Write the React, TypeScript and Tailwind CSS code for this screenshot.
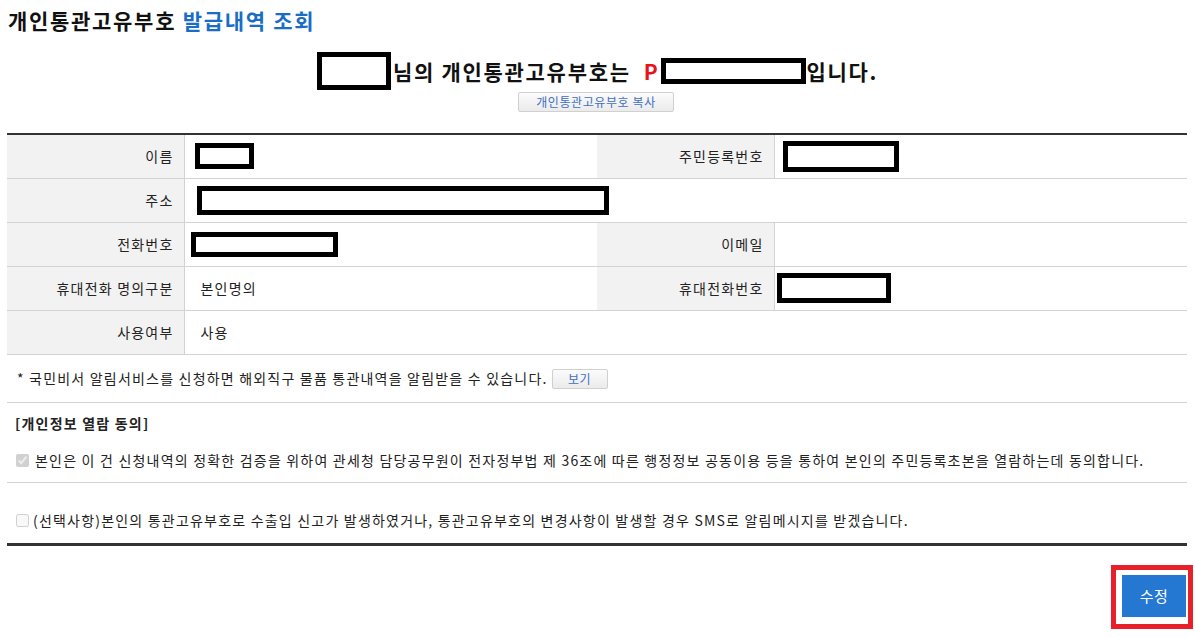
import React from 'react';

const Redact = ({ w, h, className = '' }: { w: string; h: string; className?: string }) => (
  <span className={`inline-block border-[5px] border-black bg-white align-middle ${w} ${h} ${className}`} />
);

const Label = ({ children }: { children: React.ReactNode }) => (
  <td className="bg-[#f2f2f2] text-right pr-[10px] border-r border-[#d3d3d3] align-middle">{children}</td>
);

const GrayBtn = ({ w, children }: { w: string; children: React.ReactNode }) => (
  <button className={`${w} h-[20px] border border-[#d0d0d0] rounded-[2px] bg-gradient-to-b from-[#fbfbfb] to-[#ebebeb] text-[12px] text-[#3f6fc2] leading-none tracking-[0.6px]`}>
    {children}
  </button>
);

export default function App() {
  return (
    <div className="w-[1195px] h-[638px] bg-white text-[#222] tracking-[1.2px] font-['Malgun_Gothic','Noto_Sans_CJK_KR',sans-serif] overflow-hidden">
      <h1 className="pl-[8px] pt-[6px] h-[34px] text-[21px] font-bold leading-[28px] text-[#111] tracking-[1.7px]">
        개인통관고유부호 <span className="text-[#1a6dc4]">발급내역 조회</span>
      </h1>

      <div className="mt-[18px] h-[38px] flex items-center justify-center text-[21px] font-bold text-[#111] leading-none tracking-[1.7px]">
        <Redact w="w-[74px]" h="h-[38px]" className="mr-[2px]" />
        <span>님의 개인통관고유부호는</span>
        <span className="text-[#e8141c] ml-[13px] mr-[2px]">P</span>
        <Redact w="w-[145px]" h="h-[26px]" />
        <span>입니다.</span>
      </div>

      <div className="flex justify-center mt-[2px] pr-[3px]">
        <GrayBtn w="w-[156px]">개인통관고유부호 복사</GrayBtn>
      </div>

      <table className="ml-[7px] mt-[21px] w-[1180px] border-t-2 border-[#333] border-collapse text-[14px] text-[#222] table-fixed">
        <colgroup>
          <col className="w-[177px]" />
          <col className="w-[413px]" />
          <col className="w-[177px]" />
          <col />
        </colgroup>
        <tbody>
          <tr className="h-[44px] border-b border-[#d3d3d3]">
            <Label>이름</Label>
            <td className="pl-[10px]"><Redact w="w-[59px]" h="h-[26px]" /></td>
            <Label>주민등록번호</Label>
            <td className="pl-[8px]"><Redact w="w-[116px]" h="h-[31px]" /></td>
          </tr>
          <tr className="h-[44px] border-b border-[#d3d3d3]">
            <Label>주소</Label>
            <td colSpan={3} className="pl-[12px]"><Redact w="w-[412px]" h="h-[29px]" /></td>
          </tr>
          <tr className="h-[44px] border-b border-[#d3d3d3]">
            <Label>전화번호</Label>
            <td className="pl-[6px]"><Redact w="w-[147px]" h="h-[25px]" /></td>
            <Label>이메일</Label>
            <td />
          </tr>
          <tr className="h-[44px] border-b border-[#d3d3d3]">
            <Label>휴대전화 명의구분</Label>
            <td className="pl-[16px]">본인명의</td>
            <Label>휴대전화번호</Label>
            <td className="pl-[2px]"><Redact w="w-[114px]" h="h-[30px]" /></td>
          </tr>
          <tr className="h-[44px] border-b border-[#d3d3d3]">
            <Label>사용여부</Label>
            <td colSpan={3} className="pl-[16px]">사용</td>
          </tr>
        </tbody>
      </table>

      <div className="ml-[7px] w-[1180px] text-[14px] text-[#222]">
        <div className="h-[48px] flex items-center pl-[10px] border-b border-[#d3d3d3]">
          <span>* 국민비서 알림서비스를 신청하면 해외직구 물품 통관내역을 알림받을 수 있습니다.</span>
          <span className="ml-[4px]">
            <GrayBtn w="w-[56px]">보기</GrayBtn>
          </span>
        </div>
        <div className="h-[80px] border-b border-[#d3d3d3] pl-[8px] pt-[10px]">
          <div className="h-[22px] flex items-center font-bold">[개인정보 열람 동의]</div>
          <label className="mt-[16px] h-[20px] flex items-center gap-[6px]">
            <input type="checkbox" checked disabled readOnly className="w-[13px] h-[13px] m-0 ml-[1px]" />
            <span>본인은 이 건 신청내역의 정확한 검증을 위하여 관세청 담당공무원이 전자정부법 제 36조에 따른 행정정보 공동이용 등을 통하여 본인의 주민등록초본을 열람하는데 동의합니다.</span>
          </label>
        </div>
        <div className="h-[63px] border-b-[3px] border-[#333] pl-[8px] pt-[28px]">
          <label className="h-[20px] flex items-center gap-[4px]">
            <input type="checkbox" disabled className="w-[13px] h-[13px] m-0 ml-[1px]" />
            <span>(선택사항)본인의 통관고유부호로 수출입 신고가 발생하였거나, 통관고유부호의 변경사항이 발생할 경우 SMS로 알림메시지를 받겠습니다.</span>
          </label>
        </div>
      </div>

      <div className="flex justify-end pr-[2px] mt-[19px]">
        <div className="border-[5px] border-[#e8202a] pl-[6px] pr-[2px] pt-[5px] pb-[7px]">
          <button className="w-[64px] h-[42px] bg-[#2478d2] text-white text-[15px] leading-none tracking-[0.5px]">수정</button>
        </div>
      </div>
    </div>
  );
}
